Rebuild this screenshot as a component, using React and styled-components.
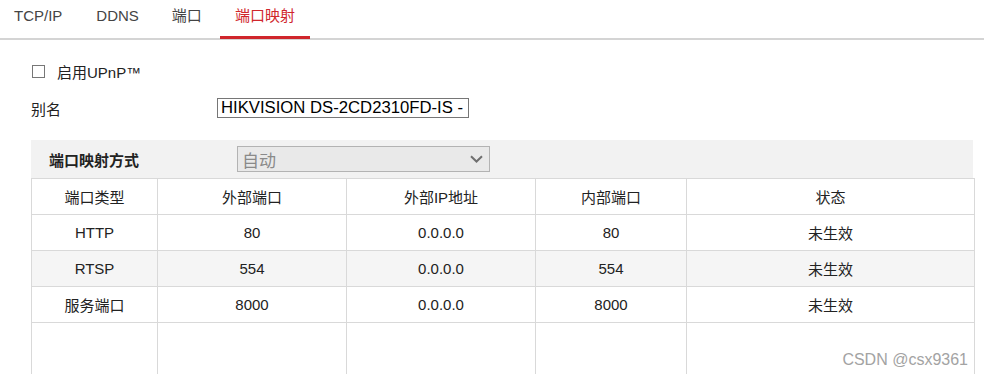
import React from 'react';
import styled, { createGlobalStyle } from 'styled-components';

const GlobalStyle = createGlobalStyle`
  html, body {
    margin: 0;
    padding: 0;
    background: #fff;
  }
  body {
    font-family: "Liberation Sans", Arial, "Noto Sans CJK SC", sans-serif;
    color: #222;
  }
`;

const Page = styled.div`
  position: relative;
  width: 984px;
  height: 374px;
  overflow: hidden;
`;

const TabBar = styled.ul`
  display: flex;
  margin: 0;
  padding: 0;
  list-style: none;
  height: 38px;
  border-bottom: 2px solid #d4d4d4;
`;

const Tab = styled.li`
  box-sizing: border-box;
  height: 39px;
  padding: 0 ${(p) => p.$padRight}px 0 ${(p) => p.$padLeft}px;
  line-height: 31px;
  font-size: 15px;
  color: ${(p) => (p.$active ? '#d0262c' : '#444')};
  border-bottom: 3px solid ${(p) => (p.$active ? '#d0262c' : 'transparent')};
`;

const Content = styled.div`
  padding: 21px 11px 0 31px;
`;

const CheckRow = styled.label`
  display: flex;
  align-items: center;
  height: 20px;
  font-size: 15px;
  color: #222;
`;

const CheckBox = styled.span`
  box-sizing: border-box;
  width: 13px;
  height: 13px;
  margin: 1px 12px 0 1px;
  border: 1px solid #777;
  background: #fff;
`;

const FieldRow = styled.div`
  display: flex;
  align-items: center;
  margin-top: 17px;
  height: 20px;
  font-size: 15px;
`;

const FieldLabel = styled.span`
  width: 186px;
`;

const TextBox = styled.div`
  box-sizing: border-box;
  width: 252px;
  height: 20px;
  padding: 0 3px;
  border: 1px solid #767676;
  font-size: 16.7px;
  line-height: 18px;
  color: #000;
  white-space: nowrap;
  overflow: hidden;
`;

const ModeBar = styled.div`
  display: flex;
  align-items: center;
  margin-top: 22px;
  height: 38px;
  padding-left: 18px;
  background: #f2f2f2;
`;

const ModeLabel = styled.span`
  width: 188px;
  font-size: 15px;
  font-weight: bold;
  color: #222;
`;

const Select = styled.div`
  box-sizing: border-box;
  display: flex;
  align-items: center;
  justify-content: space-between;
  width: 253px;
  height: 26px;
  padding: 0 6px 0 4px;
  border: 1px solid #b3b3b3;
  background: #e9e9e9;
  font-size: 17px;
  color: #8a8a8a;
`;

const Table = styled.table`
  width: 943px;
  border-collapse: collapse;
  table-layout: fixed;
  font-size: 15px;
  color: #222;
`;

const Th = styled.th`
  height: 35px;
  padding: 0;
  font-weight: normal;
  text-align: center;
  border: 1px solid #d9d9d9;
`;

const Tr = styled.tr`
  background: ${(p) => (p.$striped ? '#f5f5f5' : '#fff')};
`;

const Td = styled.td`
  height: ${(p) => p.$h || 35}px;
  padding: 0;
  text-align: center;
  border: 1px solid #d9d9d9;
`;

const Watermark = styled.div`
  position: absolute;
  right: 16px;
  bottom: 5px;
  font-size: 16px;
  color: #a3a3a3;
`;

const tabs = [
  { label: 'TCP/IP', padLeft: 14, padRight: 17 },
  { label: 'DDNS', padLeft: 17, padRight: 17 },
  { label: '端口', padLeft: 16, padRight: 18 },
  { label: '端口映射', padLeft: 15, padRight: 15, active: true },
];

const columns = [
  { title: '端口类型', width: 126 },
  { title: '外部端口', width: 189 },
  { title: '外部IP地址', width: 189 },
  { title: '内部端口', width: 151 },
  { title: '状态', width: 288 },
];

const rows = [
  ['HTTP', '80', '0.0.0.0', '80', '未生效'],
  ['RTSP', '554', '0.0.0.0', '554', '未生效'],
  ['服务端口', '8000', '0.0.0.0', '8000', '未生效'],
];

const Chevron = () => (
  <svg width="13" height="8" viewBox="0 0 13 8">
    <path d="M1 1.2 L6.5 6.5 L12 1.2" fill="none" stroke="#6f6f6f" strokeWidth="2" />
  </svg>
);

export default function App() {
  return (
    <Page>
      <GlobalStyle />
      <TabBar>
        {tabs.map((t) => (
          <Tab key={t.label} $padLeft={t.padLeft} $padRight={t.padRight} $active={t.active}>
            {t.label}
          </Tab>
        ))}
      </TabBar>
      <Content>
        <CheckRow>
          <CheckBox />
          启用UPnP™
        </CheckRow>
        <FieldRow>
          <FieldLabel>别名</FieldLabel>
          <TextBox>HIKVISION DS-2CD2310FD-IS -</TextBox>
        </FieldRow>
        <ModeBar>
          <ModeLabel>端口映射方式</ModeLabel>
          <Select>
            <span>自动</span>
            <Chevron />
          </Select>
        </ModeBar>
        <Table>
          <colgroup>
            {columns.map((c) => (
              <col key={c.title} style={{ width: c.width }} />
            ))}
          </colgroup>
          <thead>
            <tr>
              {columns.map((c) => (
                <Th key={c.title}>{c.title}</Th>
              ))}
            </tr>
          </thead>
          <tbody>
            {rows.map((r, i) => (
              <Tr key={r[0]} $striped={i % 2 === 1}>
                {r.map((cell, j) => (
                  <Td key={j}>{cell}</Td>
                ))}
              </Tr>
            ))}
            <Tr>
              {columns.map((c) => (
                <Td key={c.title} $h={70} />
              ))}
            </Tr>
          </tbody>
        </Table>
      </Content>
      <Watermark>CSDN @csx9361</Watermark>
    </Page>
  );
}
